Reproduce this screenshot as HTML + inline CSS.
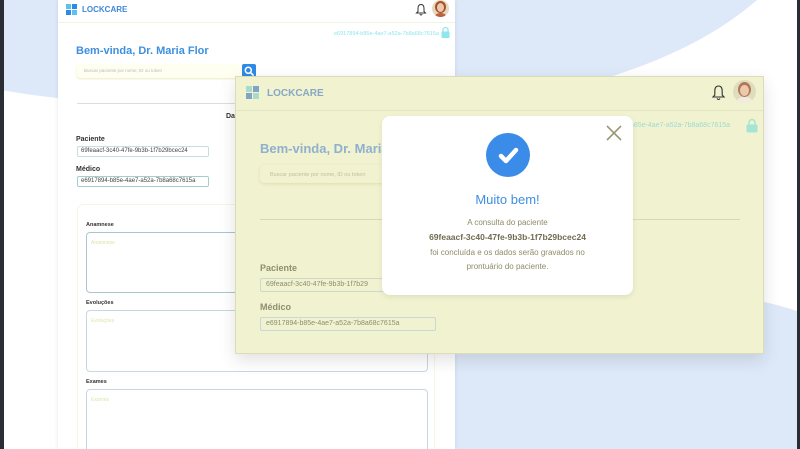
<!DOCTYPE html>
<html><head><meta charset="utf-8"><style>
*{margin:0;padding:0;box-sizing:border-box}
html,body{width:800px;height:449px;overflow:hidden}
body{position:relative;background:#fff;font-family:"Liberation Sans",sans-serif}
.abs{position:absolute}
.t{white-space:nowrap}
</style></head><body>
<svg class="abs" style="left:0;top:0" width="800" height="449">
<rect width="800" height="449" fill="#dde9f9"/>
<path d="M0 90 Q60 100 120 104 L120 449 L0 449Z" fill="#fff"/>
<path d="M757 0 Q700 50 600 80 L640 300 Q720 285 800 312 L800 0Z" fill="#fff"/>
<rect x="0" y="0" width="4" height="449" fill="#2a2d33"/>
<rect x="797" y="0" width="3" height="449" fill="#2a2d33"/>
</svg>
<!-- left card -->
<div class="abs" style="left:58px;top:0;width:397px;height:449px;background:#fff;box-shadow:0 0 4px rgba(0,0,0,.1);overflow:hidden">
<div class="abs" style="left:8px;top:4px;width:5px;height:5px;background:#5bc2f0"></div>
<div class="abs" style="left:14px;top:4px;width:5px;height:5px;background:#2f8ae6"></div>
<div class="abs" style="left:8px;top:10px;width:5px;height:5px;background:#2f8ae6"></div>
<div class="abs" style="left:14px;top:10px;width:5px;height:5px;background:#5bc2f0"></div>
<div class="abs t" style="left:24px;top:5px;font-size:8px;font-weight:bold;color:#3d88dd">LOCKCARE</div>
<div class="abs" style="left:0;top:22px;width:397px;height:1px;background:#f3f4df"></div>
<svg class="abs" style="left:357px;top:3px" width="12" height="13"><path d="M6 1.5C3.5 1.5 3 3.5 3 5.5V8.5L1.5 10H10.5L9 8.5V5.5C9 3.5 8.5 1.5 6 1.5ZM4.8 11.2Q6 12.8 7.2 11.2" fill="none" stroke="#333" stroke-width="1"/></svg>
<div class="abs" style="left:374px;top:0;width:17px;height:17px;border-radius:50%;background:#e6d9bc;overflow:hidden">
<div class="abs" style="left:3px;top:1px;width:11px;height:12px;border-radius:50%;background:#a4502e"></div>
<div class="abs" style="left:5px;top:3px;width:7px;height:9px;border-radius:50%;background:#efc9ae"></div>
<div class="abs" style="left:3px;top:13px;width:11px;height:6px;border-radius:50% 50% 0 0;background:#c06040"></div>
</div>
<div class="abs t" style="left:276px;top:31px;font-size:5.5px;color:#8ee6ee">e6917894-b85e-4ae7-a52a-7b8a68c7615a</div>
<svg class="abs" style="left:383px;top:26px" width="9" height="12"><path d="M2 6V4A2.5 2.5 0 0 1 7 4V6" fill="none" stroke="#8ee6ee" stroke-width="1.3"/><rect x="0.5" y="5.5" width="8" height="6.5" rx="1" fill="#8ee6ee"/></svg>
<div class="abs t" style="left:18px;top:45px;font-size:11px;font-weight:bold;color:#3d8fe0">Bem-vinda, Dr. Maria Flor</div>
<div class="abs" style="left:19px;top:64px;width:166px;height:14px;background:#fefff0;border-radius:3px;box-shadow:0 1px 2px #eee9c0"></div>
<div class="abs t" style="left:26px;top:68px;font-size:4.5px;color:#bbb">Buscar paciente por nome, ID ou token</div>
<div class="abs" style="left:184px;top:64px;width:14px;height:14px;background:#2f8ae6;border-radius:2px"></div>
<svg class="abs" style="left:184px;top:64px" width="14" height="14"><circle cx="6.3" cy="6.3" r="3" fill="none" stroke="#fff" stroke-width="1.5"/><path d="M8.5 8.5L11 11" stroke="#fff" stroke-width="1.8" stroke-linecap="round"/></svg>
<div class="abs" style="left:19px;top:103px;width:380px;height:1px;background:#ddd"></div>
<div class="abs t" style="left:168px;top:113px;font-size:7px;font-weight:bold;color:#333">Dad</div>
<div class="abs t" style="left:18px;top:136px;font-size:7px;font-weight:bold;color:#333">Paciente</div>
<div class="abs" style="left:19px;top:146px;width:132px;height:11px;border:1px solid #c8dede;border-radius:2px"></div>
<div class="abs t" style="left:23px;top:148px;font-size:6px;color:#444">69feaacf-3c40-47fe-9b3b-1f7b29bcec24</div>
<div class="abs t" style="left:18px;top:166px;font-size:7px;font-weight:bold;color:#333">Médico</div>
<div class="abs" style="left:19px;top:176px;width:132px;height:11px;border:1px solid #a8cccc;border-radius:2px"></div>
<div class="abs t" style="left:23px;top:178px;font-size:6px;color:#444">e6917894-b85e-4ae7-a52a-7b8a68c7615a</div>
<div class="abs" style="left:19px;top:204px;width:358px;height:260px;border:1px solid #f5f6e6;border-radius:6px"></div>
<div class="abs t" style="left:28px;top:222px;font-size:5.5px;font-weight:bold;color:#333">Anamnese</div>
<div class="abs" style="left:28px;top:232px;width:342px;height:61px;border:1px solid #a9c6d0;border-radius:4px"></div>
<div class="abs t" style="left:33px;top:240px;font-size:5px;color:#d8e6a8">Anamnese</div>
<div class="abs t" style="left:28px;top:300px;font-size:5.5px;font-weight:bold;color:#333">Evoluções</div>
<div class="abs" style="left:28px;top:310px;width:342px;height:62px;border:1px solid #c6d8de;border-radius:4px"></div>
<div class="abs t" style="left:33px;top:318px;font-size:5px;color:#d8e6a8">Evoluções</div>
<div class="abs t" style="left:28px;top:379px;font-size:5.5px;font-weight:bold;color:#333">Exames</div>
<div class="abs" style="left:28px;top:389px;width:342px;height:70px;border:1px solid #c6d8de;border-radius:4px"></div>
<div class="abs t" style="left:33px;top:397px;font-size:5px;color:#d8e6a8">Exames</div>
</div>
<!-- overlay screenshot -->
<div class="abs" style="left:235px;top:76px;width:529px;height:278px;background:#f1f2cf;border:1px solid #dcdcb8;box-shadow:0 6px 16px rgba(0,0,0,.12);overflow:hidden">
<div class="abs" style="left:10px;top:9px;width:6px;height:6px;background:#a8dcc8"></div>
<div class="abs" style="left:17px;top:9px;width:6px;height:6px;background:#7fa4c8"></div>
<div class="abs" style="left:10px;top:16px;width:6px;height:6px;background:#7fa4c8"></div>
<div class="abs" style="left:17px;top:16px;width:6px;height:6px;background:#a8dcc8"></div>
<div class="abs t" style="left:31px;top:11px;font-size:10px;font-weight:bold;color:#86a8c6">LOCKCARE</div>
<div class="abs" style="left:0;top:33px;width:529px;height:1px;background:#e3e4c0"></div>
<svg class="abs" style="left:475px;top:7px" width="15" height="17"><path d="M7.5 2C4.5 2 3.8 4.5 3.8 7V11L2 13H13L11.2 11V7C11.2 4.5 10.5 2 7.5 2ZM6 14.5Q7.5 16.5 9 14.5" fill="none" stroke="#333" stroke-width="1.1"/></svg>
<div class="abs" style="left:497px;top:3px;width:23px;height:23px;border-radius:50%;background:#e0dcc0;overflow:hidden">
<div class="abs" style="left:5px;top:2px;width:13px;height:15px;border-radius:50%;background:#b07a55"></div>
<div class="abs" style="left:7px;top:5px;width:9px;height:11px;border-radius:50%;background:#ecc9ae"></div>
<div class="abs" style="left:4px;top:17px;width:15px;height:8px;border-radius:50% 50% 0 0;background:#f0ece0"></div>
</div>
<div class="abs t" style="left:380px;top:45px;font-size:7px;color:#9edcd0">4e7-b85e-4ae7-a52a-7b8a68c7615a</div>
<svg class="abs" style="left:510px;top:40px" width="12" height="16"><path d="M3 8V5.5A3 3 0 0 1 9 5.5V8" fill="none" stroke="#a8e4d4" stroke-width="1.6"/><rect x="0.5" y="7.5" width="11" height="8" rx="1.5" fill="#a8e4d4"/></svg>
<div class="abs t" style="left:24px;top:64px;font-size:13px;font-weight:bold;color:#8fb0cf">Bem-vinda, Dr. Maria</div>
<div class="abs" style="left:24px;top:88px;width:160px;height:18px;border-radius:4px;box-shadow:0 1px 3px #dedcb0"></div>
<div class="abs t" style="left:34px;top:95px;font-size:5.5px;color:#c0bfa0">Buscar paciente por nome, ID ou token</div>
<div class="abs" style="left:24px;top:142px;width:480px;height:1px;background:#d8d8b4"></div>
<div class="abs t" style="left:24px;top:186px;font-size:9px;font-weight:bold;color:#8e8e70">Paciente</div>
<div class="abs" style="left:24px;top:201px;width:140px;height:14px;border:1px solid #cfd8d0;border-radius:2px"></div>
<div class="abs t" style="left:30px;top:204px;font-size:7px;color:#8e8e70">69feaacf-3c40-47fe-9b3b-1f7b29</div>
<div class="abs t" style="left:24px;top:225px;font-size:9px;font-weight:bold;color:#8e8e70">Médico</div>
<div class="abs" style="left:24px;top:240px;width:176px;height:14px;border:1px solid #c8d8d8;border-radius:2px"></div>
<div class="abs t" style="left:30px;top:243px;font-size:7px;color:#8e8e70">e6917894-b85e-4ae7-a52a-7b8a68c7615a</div>
</div>
<!-- popup -->
<div class="abs" style="left:382px;top:116px;width:251px;height:179px;background:#fff;border-radius:8px;box-shadow:0 2px 6px rgba(0,0,0,.08)">
<svg class="abs" style="left:224px;top:9px" width="16" height="16"><path d="M1 1L15 15M15 1L1 15" stroke="#9a9870" stroke-width="1.6"/></svg>
<div class="abs" style="left:104px;top:17px;width:44px;height:44px;border-radius:50%;background:#3a8ce8"></div>
<svg class="abs" style="left:104px;top:17px" width="44" height="44"><path d="M15 23L20 28L30 17" stroke="#fff" stroke-width="4.5" fill="none" stroke-linecap="round" stroke-linejoin="round"/></svg>
<div class="abs t" style="left:0;width:251px;text-align:center;top:76px;font-size:13px;color:#3d8fe0">Muito bem!</div>
<div class="abs t" style="left:0;width:251px;text-align:center;top:100px;font-size:8px;line-height:14.3px;color:#8e8c68">A consulta do paciente<br><b style="color:#6e6c50;font-size:8.5px">69feaacf-3c40-47fe-9b3b-1f7b29bcec24</b><br>foi concluída e os dados serão gravados no<br>prontuário do paciente.</div>
</div>
</body></html>
